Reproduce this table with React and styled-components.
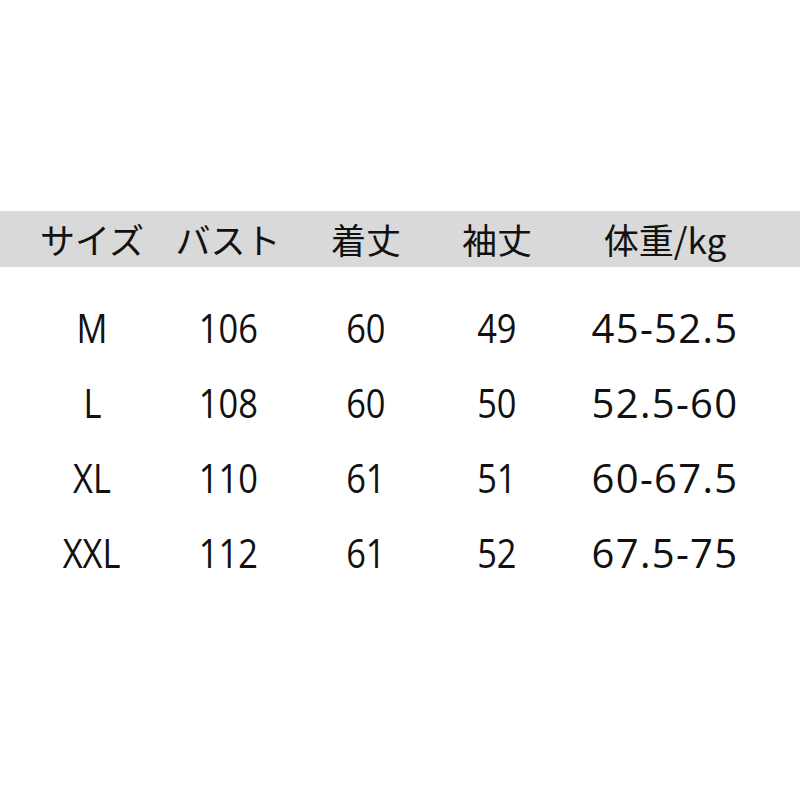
import React from 'react';
import styled, { createGlobalStyle } from 'styled-components';

const GlobalStyle = createGlobalStyle`
  html, body {
    margin: 0;
    padding: 0;
    background: #fff;
  }
`;

const columns = '136px 136px 140px 122px 214px';

const headers = ['サイズ', 'バスト', '着丈', '袖丈', '体重/kg'];

const rows = [
  ['M', '106', '60', '49', '45-52.5'],
  ['L', '108', '60', '50', '52.5-60'],
  ['XL', '110', '61', '51', '60-67.5'],
  ['XXL', '112', '61', '52', '67.5-75'],
];

const Page = styled.div`
  width: 800px;
  height: 800px;
  padding-top: 211px;
  box-sizing: border-box;
  background: #fff;
  color: #111;
  font-family: "Open Sans", "Noto Sans CJK JP", sans-serif;
`;

const HeaderBand = styled.div`
  display: grid;
  grid-template-columns: ${columns};
  padding-left: 24px;
  height: 56px;
  align-items: center;
  background: #d9d9d9;
`;

const HeadCell = styled.div`
  text-align: center;
  font-family: "Noto Sans CJK JP", sans-serif;
  font-size: 35px;
  line-height: 56px;
  white-space: nowrap;
`;

const Body = styled.div`
  margin-top: 23px;
`;

const Row = styled.div`
  display: grid;
  grid-template-columns: ${columns};
  padding-left: 24px;
  height: 75px;
  align-items: center;
`;

const Cell = styled.div`
  text-align: center;
  line-height: 75px;
  white-space: nowrap;
`;

const Value = styled.span`
  display: inline-block;
  font-size: 40px;
  letter-spacing: ${(p) => (p.$wide ? '1.3px' : '0')};
  transform: ${(p) => (p.$wide ? 'none' : 'scaleX(0.86)')};
`;

export default function App() {
  return (
    <Page>
      <GlobalStyle />
      <HeaderBand>
        {headers.map((h) => (
          <HeadCell key={h}>{h}</HeadCell>
        ))}
      </HeaderBand>
      <Body>
        {rows.map((r) => (
          <Row key={r[0]}>
            {r.map((v, i) => (
              <Cell key={i}>
                <Value $wide={i === 4}>{v}</Value>
              </Cell>
            ))}
          </Row>
        ))}
      </Body>
    </Page>
  );
}
